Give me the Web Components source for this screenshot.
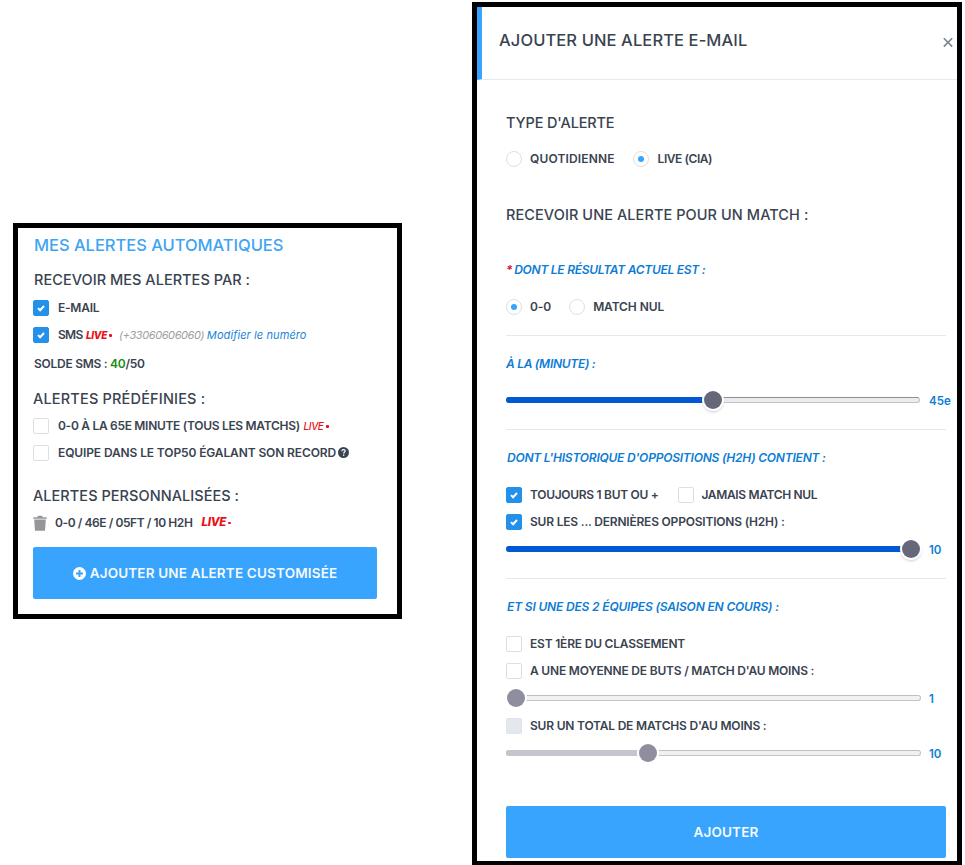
<!DOCTYPE html>
<html lang="fr"><head><meta charset="utf-8"><title>Alertes</title>
<style>
html,body{margin:0;padding:0;background:#fff;height:865px;overflow:hidden}
body{display:flex;align-items:flex-start;font-family:Inter,"Open Sans",sans-serif;color:#3a4350}
x-box{margin-left:13px;margin-top:223px;width:389px;flex:none}
x-modal{margin-left:70px;margin-top:2px;width:490px;flex:none;--cg:8px}
x-modal x-check{letter-spacing:-.2px}
</style></head><body>
<x-box>
  <x-text kind="title" style="margin-top:7px">MES ALERTES AUTOMATIQUES</x-text>
  <x-text kind="head" style="margin-top:15px;padding-left:1px;letter-spacing:.04px">RECEVOIR MES ALERTES PAR :</x-text>
  <x-check checked style="margin-top:10px;letter-spacing:-.25px">E-MAIL</x-check>
  <x-check checked style="margin-top:11px;letter-spacing:-.7px">SMS <x-live></x-live><x-note></x-note></x-check>
  <x-text kind="label" style="margin-top:13px;letter-spacing:-.27px;padding-left:1px">SOLDE SMS : <x-green>40</x-green>/50</x-text>
  <x-text kind="head" style="margin-top:16px;letter-spacing:.18px;line-height:21px">ALERTES PRÉDÉFINIES :</x-text>
  <x-check style="margin-top:10px;letter-spacing:-.3px">0-0 À LA 65E MINUTE (TOUS LES MATCHS) <x-live small></x-live></x-check>
  <x-check style="margin-top:11px;letter-spacing:-.12px">EQUIPE DANS LE TOP50 ÉGALANT SON RECORD <x-help></x-help></x-check>
  <x-text kind="head" style="margin-top:25px;letter-spacing:.05px">ALERTES PERSONNALISÉES :</x-text>
  <x-custom style="margin-top:8px;letter-spacing:-.42px">0-0 / 46E / 05FT / 10 H2H</x-custom>
  <x-btn plus style="margin-top:17px">AJOUTER UNE ALERTE CUSTOMISÉE</x-btn>
</x-box>
<x-modal>
  <span slot="title">AJOUTER UNE ALERTE E-MAIL</span>
  <x-text kind="head" style="margin-top:32px;letter-spacing:-.15px;line-height:21px">TYPE D'ALERTE</x-text>
  <x-opts style="margin-top:19px"><x-radio style="letter-spacing:.15px">QUOTIDIENNE</x-radio><x-radio on style="margin-left:18px;--rg:9px;letter-spacing:-.45px">LIVE (CIA)</x-radio></x-opts>
  <x-text kind="head" style="margin-top:38px">RECEVOIR UNE ALERTE POUR UN MATCH :</x-text>
  <x-text kind="sub" req style="margin-top:37px;letter-spacing:-.27px">DONT LE RÉSULTAT ACTUEL EST :</x-text>
  <x-opts style="margin-top:21px"><x-radio on>0-0</x-radio><x-radio style="margin-left:18px">MATCH NUL</x-radio></x-opts>
  <x-rule style="margin-top:20px"></x-rule>
  <x-text kind="sub" style="margin-top:20px;letter-spacing:-.3px">À LA (MINUTE) :</x-text>
  <x-slider pos="207" end="414" value="45e" style="margin-top:18px"></x-slider>
  <x-rule style="margin-top:19px"></x-rule>
  <x-text kind="sub" style="margin-top:20px;letter-spacing:-.22px;padding-left:1px">DONT L'HISTORIQUE D'OPPOSITIONS (H2H) CONTIENT :</x-text>
  <x-opts style="margin-top:21px"><x-check checked style="letter-spacing:-.3px">TOUJOURS 1 BUT OU +</x-check><x-check style="margin-left:19px;letter-spacing:-.35px">JAMAIS MATCH NUL</x-check></x-opts>
  <x-check checked style="margin-top:11px">SUR LES ... DERNIÈRES OPPOSITIONS (H2H) :</x-check>
  <x-slider pos="405" end="414" value="10" style="margin-top:9px"></x-slider>
  <x-rule style="margin-top:19px"></x-rule>
  <x-text kind="sub" style="margin-top:20px;letter-spacing:-.17px;padding-left:1px">ET SI UNE DES 2 ÉQUIPES (SAISON EN COURS) :</x-text>
  <x-check style="margin-top:21px">EST 1ÈRE DU CLASSEMENT</x-check>
  <x-check style="margin-top:11px">A UNE MOYENNE DE BUTS / MATCH D'AU MOINS :</x-check>
  <x-slider muted pos="10" end="415" value="1" style="margin-top:9px"></x-slider>
  <x-check disabled style="margin-top:10px">SUR UN TOTAL DE MATCHS D'AU MOINS :</x-check>
  <x-slider muted fillgrey pos="142" end="415" value="10" style="margin-top:9px"></x-slider>
  <x-btn style="margin-top:43px">AJOUTER</x-btn>
</x-modal>
<script>
function def(name,html,setup){
  customElements.define(name,class extends HTMLElement{
    constructor(){super();const r=this.attachShadow({mode:'open'});r.innerHTML=html;}
    connectedCallback(){if(setup)setup(this,this.shadowRoot);}
  });
}
const LABEL='font-size:12px;font-weight:600;letter-spacing:-.1px;color:#3a4350;white-space:nowrap;';
def('x-box',`<style>:host{display:block;box-sizing:border-box;border:5px solid #000;padding:0 20px 15px 15px;background:#fff}</style><slot></slot>`);
def('x-modal',`<style>
:host{display:block;border:5px solid #000;border-bottom-width:4px;background:#fff;box-sizing:border-box;height:863px;overflow:hidden}
header{height:72px;border-left:5px solid #38a4fd;border-bottom:1px solid #e6e9ee;display:flex;align-items:flex-start;padding-left:17px;position:relative}
h2{margin:23px 0 0;font-size:16.5px;line-height:20px;font-weight:500;letter-spacing:.1px;color:#3a4350;white-space:nowrap}
.x{position:absolute;right:1px;top:27px;width:16px;height:16px}
.b{padding:0 11px 3px 29px}
</style><header><h2><slot name="title"></slot></h2>
<svg class="x" viewBox="0 0 16 16"><path d="M3.8 4.2l8.4 8.4M12.2 4.2l-8.4 8.4" stroke="#7d858f" stroke-width="1.6" fill="none"/></svg></header>
<div class="b"><slot></slot></div>`);
def('x-text',`<style>
:host{display:block;white-space:nowrap;color:#3a4350}
:host([kind=title]){height:20px;line-height:20px;font-size:16.5px;font-weight:500;color:#3fa4f2;letter-spacing:-.03px;padding-left:1px}
:host([kind=head]){height:20px;line-height:20px;font-size:14.5px;font-weight:500;letter-spacing:.08px}
:host([kind=label]){height:16px;line-height:16px;font-size:12px;font-weight:600;letter-spacing:-.1px}
:host([kind=sub]){height:16px;line-height:16px;font-size:12px;font-weight:600;font-style:italic;color:#0c7cd5;letter-spacing:-.1px}
i{color:#e01018;font-style:italic;margin-right:2px;display:none}
:host([req]) i{display:inline}
</style><i>*</i><slot></slot>`);
def('x-green',`<style>:host{color:#1e8a17}</style><slot></slot>`);
def('x-live',`<style>:host{display:inline-block;margin-left:1px;color:#ea0f17;font-size:10px;font-weight:800;font-style:italic;letter-spacing:-.3px}
:host([small]){font-weight:500;letter-spacing:-.4px}
b{display:inline-block;width:3px;height:2.5px;margin-left:2px;border-radius:1px;background:#ea0f17;vertical-align:2px}</style>LIVE<b></b>`);
def('x-note',`<style>:host{display:inline;margin-left:7px;font-size:11px;font-weight:400;font-style:italic;letter-spacing:-.4px;color:#a0a0a0}
span{color:#1b84d8;letter-spacing:.1px}</style>(+33060606060) <span>Modifier le numéro</span>`);
def('x-help',`<style>:host{display:inline-block;vertical-align:-1.5px;width:11px;height:11px;margin-left:-1px}svg{display:block}</style>
<svg width="11" height="11" viewBox="0 0 11 11"><circle cx="5.5" cy="5.5" r="5.5" fill="#3a4350"/><path d="M3.8 4.2c.1-1 .8-1.5 1.7-1.5 1 0 1.7.6 1.7 1.4 0 1.2-1.6 1.2-1.6 2.4" stroke="#fff" stroke-width="1.2" fill="none"/><rect x="5" y="7.5" width="1.3" height="1.3" fill="#fff"/></svg>`);
def('x-check',`<style>
:host{display:flex;align-items:center;height:16px;${LABEL}}
.c{flex:none;width:16px;height:16px;box-sizing:border-box;border:1px solid #dcdfe4;border-radius:2px;background:#fff;margin-right:var(--cg,9px)}
:host([checked]) .c{background:#2390ea;border-color:#2390ea}
:host([disabled]) .c{background:#e3e7ee;border-color:#dfe3ea}
svg{display:none;width:14px;height:14px}
:host([checked]) svg{display:block}
span{padding-bottom:2px}
</style><div class="c"><svg viewBox="0 0 14 14"><path d="M4 7.1l2.1 2.1L10 5" fill="none" stroke="#fff" stroke-width="2"/></svg></div><span><slot></slot></span>`);
def('x-radio',`<style>
:host{display:inline-flex;align-items:center;height:16px;${LABEL}}
.r{flex:none;width:16px;height:16px;box-sizing:border-box;border:1px solid #dcdfe4;border-radius:50%;margin-right:var(--rg,8px);display:flex;align-items:center;justify-content:center}
.r i{display:none;width:6px;height:6px;border-radius:50%;background:#38a4fd}
:host([on]) .r i{display:block}
span{padding-bottom:2px}
</style><div class="r"><i></i></div><span><slot></slot></span>`);
def('x-opts',`<style>:host{display:flex;height:16px;align-items:center}</style><slot></slot>`);
def('x-rule',`<style>:host{display:block;height:1px;background:#e6e8ec}</style>`);
def('x-custom',`<style>
:host{display:flex;align-items:center;height:16px;${LABEL}}
svg{flex:none;margin-right:8px;margin-top:1px}
x-live{margin-left:9px;font-size:11.5px}
</style><svg width="14" height="16" viewBox="0 0 14 16"><path d="M0.3 2.2h4L5 .8h4l.7 1.4h4v1.6H.3zM1.2 4.6h11.6l-.7 10.1c0 .7-.5 1.1-1.1 1.1H3c-.6 0-1.1-.4-1.1-1.1z" fill="#959699"/></svg><slot></slot><x-live></x-live>`);
def('x-slider',`<style>
:host{display:block;position:relative;height:20px}
.t{position:absolute;left:0;top:7px;height:6px;box-sizing:border-box;border:1px solid #c3c3c8;border-top-color:#909094;border-radius:3px;background:#ececf0}
:host([muted]) .t{border-top-color:#c0c0c4;background:#f1f1f4}
.f{position:absolute;left:0;top:7px;height:6px;border-radius:3px 0 0 3px;background:#0059d0}
:host([fillgrey]) .f{background:#c4c5cd}
.h{position:absolute;top:1px;width:18px;height:18px;margin-left:-9px;border-radius:50%;background:#666779;box-shadow:0 0 0 2px #fff,0 2px 3px 1px rgba(0,0,0,.22)}
:host([muted]) .h{background:#8e8e9e;box-shadow:0 0 0 2px #fff}
.v{position:absolute;left:423px;top:0;line-height:22px;font-size:11.5px;font-weight:600;color:#0c7cd5}
</style><div class="t"></div><div class="f"></div><div class="h"></div><div class="v"></div>`,(el,r)=>{
  const p=+el.getAttribute('pos'),e=+el.getAttribute('end');
  r.querySelector('.t').style.width=e+'px';
  const f=r.querySelector('.f');
  if(el.hasAttribute('muted')&&!el.hasAttribute('fillgrey'))f.style.display='none';
  f.style.width=p+'px';
  r.querySelector('.h').style.left=p+'px';
  r.querySelector('.v').textContent=el.getAttribute('value');
});
def('x-btn',`<style>
:host{display:flex;align-items:center;justify-content:center;height:52px;border-radius:2px;background:#38a4fd;color:#f4faff;font-size:13.5px;font-weight:600;letter-spacing:.17px;white-space:nowrap}
svg{display:none;margin-right:4px}
:host([plus]) svg{display:block}
</style><svg width="13" height="13" viewBox="0 0 13 13"><circle cx="6.5" cy="6.5" r="6.5" fill="#fff"/><path d="M6.5 3v7M3 6.5h7" stroke="#38a4fd" stroke-width="2"/></svg><slot></slot>`);
</script>
</body></html>
